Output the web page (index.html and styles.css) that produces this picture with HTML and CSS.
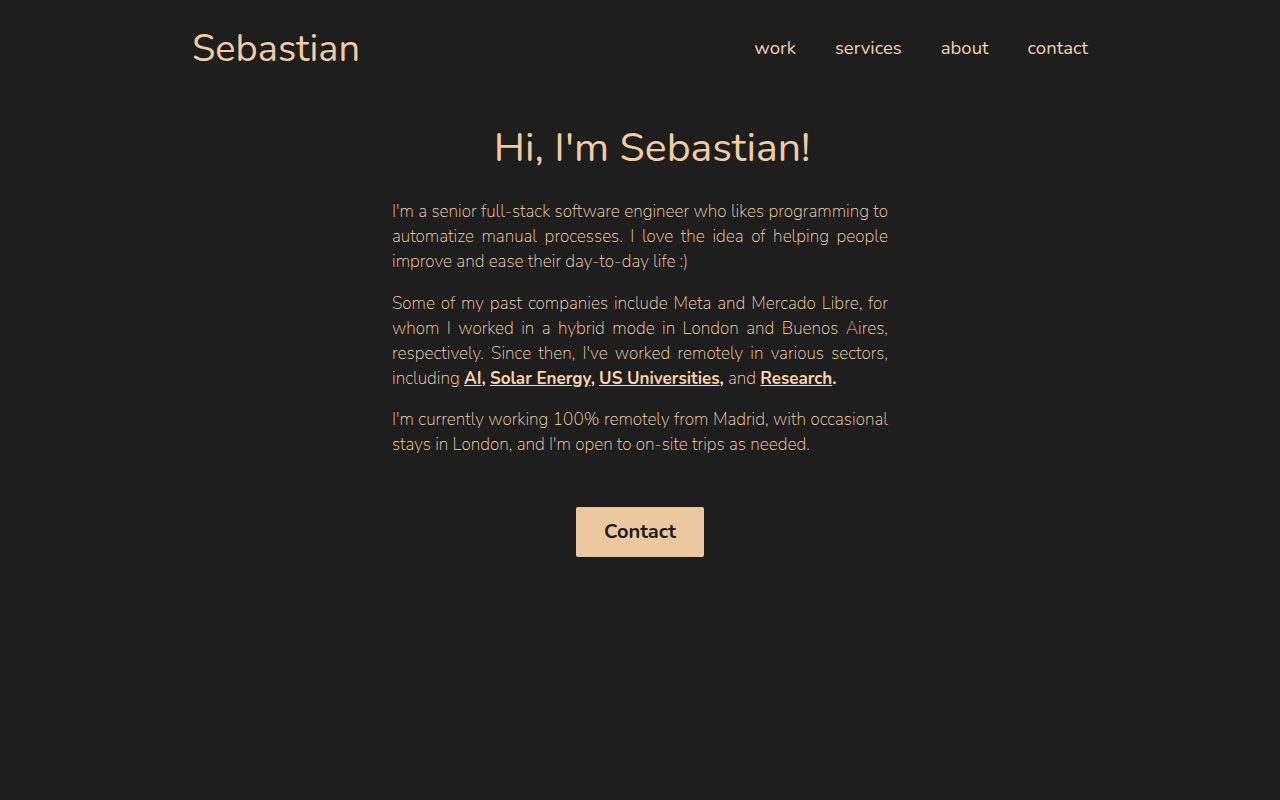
FILE: index.html
```html
<!DOCTYPE html>
<html lang="en">
<head>
<meta charset="utf-8">
<title>Sebastian</title>
<link rel="stylesheet" href="styles.css">
</head>
<body>
<header class="header">
  <a class="logo" href="#">Sebastian</a>
  <nav class="nav">
    <a href="#">work</a>
    <a href="#">services</a>
    <a href="#">about</a>
    <a href="#">contact</a>
  </nav>
</header>
<main class="main">
  <h1 class="title">Hi, I'm Sebastian!</h1>
  <div class="bio">
    <p>I'm a senior full-stack software engineer who likes programming to automatize manual processes. I love the idea of helping people improve and ease their day-to-day life :)</p>
    <p>Some of my past companies include Meta and Mercado Libre, for whom I worked in a hybrid mode in London and Buenos Aires, respectively. Since then, I've worked remotely in various sectors, including <a href="#">AI</a><b>,</b> <a href="#">Solar Energy</a><b>,</b> <a href="#">US Universities</a><b>,</b> and <a href="#">Research</a><b>.</b></p>
    <p>I'm currently working 100% remotely from Madrid, with occasional stays in London, and I'm open to on-site trips as needed.</p>
  </div>
  <a class="btn" href="#">Contact</a>
</main>
</body>
</html>
```
FILE: styles.css
```css
html, body {
  margin: 0;
  padding: 0;
}
body {
  background: #1e1e1e;
  color: #f2cba2;
  font-family: "Nunito", "Lato", "Open Sans", sans-serif;
  min-height: 800px;
}
a {
  color: inherit;
  text-decoration: none;
}
.header {
  width: 896px;
  margin: 0 auto;
  height: 96px;
  display: flex;
  align-items: center;
  justify-content: space-between;
}
.logo {
  font-size: 38px;
  font-weight: 400;
  color: #f2cba2;
}
.nav {
  display: flex;
  gap: 39px;
  font-size: 18.5px;
  color: #efd1b4;
}
.main {
  width: 496px;
  margin: 0 auto;
  display: flex;
  flex-direction: column;
  align-items: center;
}
.title {
  margin: 28px 0 27px 24px;
  font-size: 41px;
  font-weight: 400;
  line-height: 48px;
}
.bio p {
  margin: 0 0 16.5px;
  font-size: 17.2px;
  font-weight: 200;
  line-height: 25px;
  text-align: justify;
  color: #f8d3ac;
}
.bio a {
  font-size: 17px;
  font-weight: 700;
  text-decoration: underline;
}
.bio b {
  font-size: 17px;
  font-weight: 700;
}
.btn {
  margin-top: 33px;
  width: 128px;
  height: 50px;
  display: flex;
  align-items: center;
  justify-content: center;
  background: #ecc8a0;
  color: #1e1e1e;
  border-radius: 2px;
  font-size: 20px;
  font-weight: 700;
}
```
